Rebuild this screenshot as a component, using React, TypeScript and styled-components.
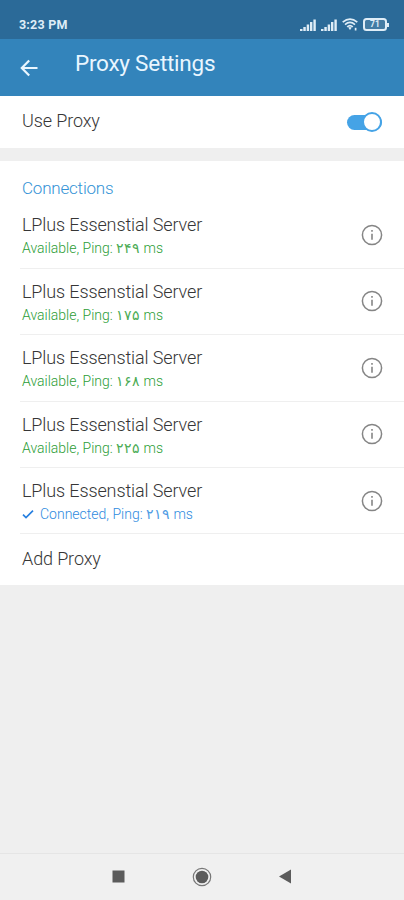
import React from 'react';
import styled, { createGlobalStyle } from 'styled-components';

const GlobalStyle = createGlobalStyle`
  * { box-sizing: border-box; }
  body { margin: 0; background: #efefef; font-family: Roboto, "DejaVu Sans", sans-serif; }
`;

const Screen = styled.div`
  width: 404px;
  height: 900px;
  display: flex;
  flex-direction: column;
  overflow: hidden;
  background: #efefef;
  color: #363636;
`;

const StatusBar = styled.header`
  height: 39px;
  flex: none;
  padding: 10px 15px 0 19px;
  display: flex;
  justify-content: space-between;
  align-items: center;
  background: #2b6a98;
  color: #dfedf7;
`;

const Clock = styled.span`
  font-size: 12.5px;
  line-height: 16px;
  font-weight: 700;
  letter-spacing: 0.2px;
`;

const StatusIcons = styled.div`
  display: flex;
  align-items: center;
  gap: 5px;
  svg { display: block; }
`;

const Toolbar = styled.div`
  height: 57px;
  flex: none;
  padding: 0 20px;
  display: flex;
  align-items: center;
  gap: 36px;
  background: #3384bb;
  color: #e9f6ff;
`;

const BackButton = styled.button`
  width: 19px;
  height: 18px;
  margin-top: 1px;
  padding: 0;
  border: 0;
  background: none;
  color: inherit;
  svg { display: block; }
`;

const Title = styled.h1`
  margin: 0 0 10px;
  font-size: 22.5px;
  line-height: 30px;
  font-weight: 400;
  letter-spacing: -0.25px;
`;

const Panel = styled.section`
  flex: none;
  background: #fff;
`;

const ToggleRow = styled(Panel)`
  height: 52px;
  margin-bottom: 13px;
  padding: 0 22px;
  display: flex;
  justify-content: space-between;
  align-items: center;
`;

const Label = styled.div`
  font-size: 18px;
  line-height: 24px;
  font-weight: 300;
  letter-spacing: -0.12px;
  white-space: nowrap;
`;

const ToggleLabel = styled(Label)`
  margin-bottom: 2px;
`;

const Track = styled.div`
  width: 35px;
  height: 15px;
  border-radius: 8px;
  background: #45a3e6;
  display: flex;
  align-items: center;
  justify-content: flex-end;
`;

const Thumb = styled.div`
  flex: none;
  width: 20px;
  height: 20px;
  border: 2px solid #45a3e6;
  border-radius: 50%;
  background: #fff;
`;

const Connections = styled(Panel)`
  height: 424px;
`;

const SectionTitle = styled.h2`
  height: 41.4px;
  margin: 0;
  padding: 15px 22px 0;
  font-size: 17px;
  line-height: 24px;
  font-weight: 300;
  letter-spacing: -0.2px;
  color: #3493d6;
`;

const ServerRow = styled.div`
  height: 66.4px;
  margin-left: 20px;
  padding: 11px 22px 0 2px;
  display: flex;
  justify-content: space-between;
  border-bottom: 1px solid #efefef;
`;

const ServerText = styled.div`
  display: flex;
  flex-direction: column;
`;

const Status = styled.div<{ $connected?: boolean }>`
  display: flex;
  align-items: center;
  gap: 6px;
  font-size: 14px;
  line-height: 23px;
  font-weight: 300;
  white-space: nowrap;
  color: ${({ $connected }) => ($connected ? '#2f8be0' : '#2b9d35')};
`;

const Digits = styled.span`
  display: inline-block;
  line-height: 1;
  font-family: "DejaVu Sans Light", "DejaVu Sans", sans-serif;
  font-size: 14px;
  font-weight: 200;
  letter-spacing: -1px;
  opacity: 0.85;
`;

const InfoButton = styled.button`
  width: 22px;
  height: 22px;
  margin: 10.6px -1px 0 0;
  padding: 0;
  border: 0;
  background: none;
  svg { display: block; }
`;

const AddRow = styled.div`
  height: 50px;
  padding: 12.6px 22px 0;
`;

const NavBar = styled.nav`
  height: 47px;
  flex: none;
  margin-top: auto;
  padding: 0 112px;
  display: flex;
  justify-content: space-between;
  align-items: center;
  border-top: 1px solid #e5e5e5;
  background: #f0f0f0;
  svg { display: block; margin-bottom: 1px; }
`;

const Signal = () => (
  <svg width="16" height="12" viewBox="0 0 16 12" fill="currentColor">
    <path d="M0 10h2.5v2H0zM3.3 8h2.5v4H3.3zM6.7 5.5h2.4V12H6.7zM10 3h2.4v9H10zM13.4.5h2.4V12h-2.4z" />
  </svg>
);

const Wifi = () => (
  <svg width="16" height="13" viewBox="0 0 16 13" fill="none" stroke="currentColor" strokeWidth="1.7">
    <path d="M.7 4.2Q8-1.8 15.3 4.2M3 6.6Q8 2.2 13 6.6M5.2 8.9Q8 6.2 10.8 8.9" />
    <path d="M6.2 9.5Q8 8.4 9.8 9.5L8 12z" fill="currentColor" stroke="none" />
    <path d="M13.6 9.8v2.7" />
  </svg>
);

const BatteryIcon = styled.div`
  display: flex;
  align-items: center;
  &::after {
    content: '';
    width: 2px;
    height: 4px;
    background: currentColor;
  }
`;

const BatteryBody = styled.div`
  width: 24px;
  height: 13px;
  border: 2px solid currentColor;
  border-radius: 3.5px;
  display: flex;
  align-items: center;
  justify-content: center;
  background: #447ca4;
  font-size: 8.5px;
  line-height: 9px;
  font-weight: 700;
`;

const InfoIcon = () => (
  <svg width="22" height="22" viewBox="0 0 22 22" fill="none" stroke="#858585">
    <circle cx="11" cy="11" r="9.6" strokeWidth="1.5" />
    <path d="M11 9.7v6M11 6.1v1.7" strokeWidth="1.6" />
  </svg>
);

const CheckIcon = () => (
  <svg width="12" height="10" viewBox="0 0 12 10" fill="none" stroke="#267fe0" strokeWidth="1.7">
    <path d="M1 5.7l3 2.8L11 1.7" />
  </svg>
);

const servers = [
  { ping: '۲۴۹' },
  { ping: '۱۷۵' },
  { ping: '۱۶۸' },
  { ping: '۲۲۵' },
  { ping: '۲۱۹', connected: true },
];

export default function App() {
  return (
    <>
      <GlobalStyle />
      <Screen>
        <StatusBar>
          <Clock>3:23 PM</Clock>
          <StatusIcons>
            <Signal />
            <Signal />
            <Wifi />
            <BatteryIcon><BatteryBody>71</BatteryBody></BatteryIcon>
          </StatusIcons>
        </StatusBar>
        <Toolbar>
          <BackButton aria-label="Back">
            <svg width="19" height="18" viewBox="0 0 19 18" fill="none" stroke="currentColor" strokeWidth="2.2">
              <path d="M9.2 1.5L1.8 9l7.4 7.5M2 9h15.5" />
            </svg>
          </BackButton>
          <Title>Proxy Settings</Title>
        </Toolbar>
        <ToggleRow>
          <ToggleLabel>Use Proxy</ToggleLabel>
          <Track><Thumb /></Track>
        </ToggleRow>
        <Connections>
          <SectionTitle>Connections</SectionTitle>
          {servers.map(({ ping, connected }) => (
            <ServerRow key={ping}>
              <ServerText>
                <Label>LPlus Essenstial Server</Label>
                <Status $connected={connected}>
                  {connected && <CheckIcon />}
                  <span>{connected ? 'Connected' : 'Available'}, Ping: <Digits>{ping}</Digits> ms</span>
                </Status>
              </ServerText>
              <InfoButton aria-label="Server details"><InfoIcon /></InfoButton>
            </ServerRow>
          ))}
          <AddRow><Label>Add Proxy</Label></AddRow>
        </Connections>
        <NavBar>
          <svg width="13" height="13" viewBox="0 0 13 13"><path fill="#5b5b5b" d="M.5.5h12v12H.5z" /></svg>
          <svg width="20" height="20" viewBox="0 0 20 20">
            <circle cx="10" cy="10" r="8.7" fill="none" stroke="#777" strokeWidth="1.2" />
            <circle cx="10" cy="10" r="6.3" fill="#5b5b5b" />
          </svg>
          <svg width="14" height="15" viewBox="0 0 14 15"><path fill="#5b5b5b" d="M13 .5v14L1 7.5z" /></svg>
        </NavBar>
      </Screen>
    </>
  );
}
